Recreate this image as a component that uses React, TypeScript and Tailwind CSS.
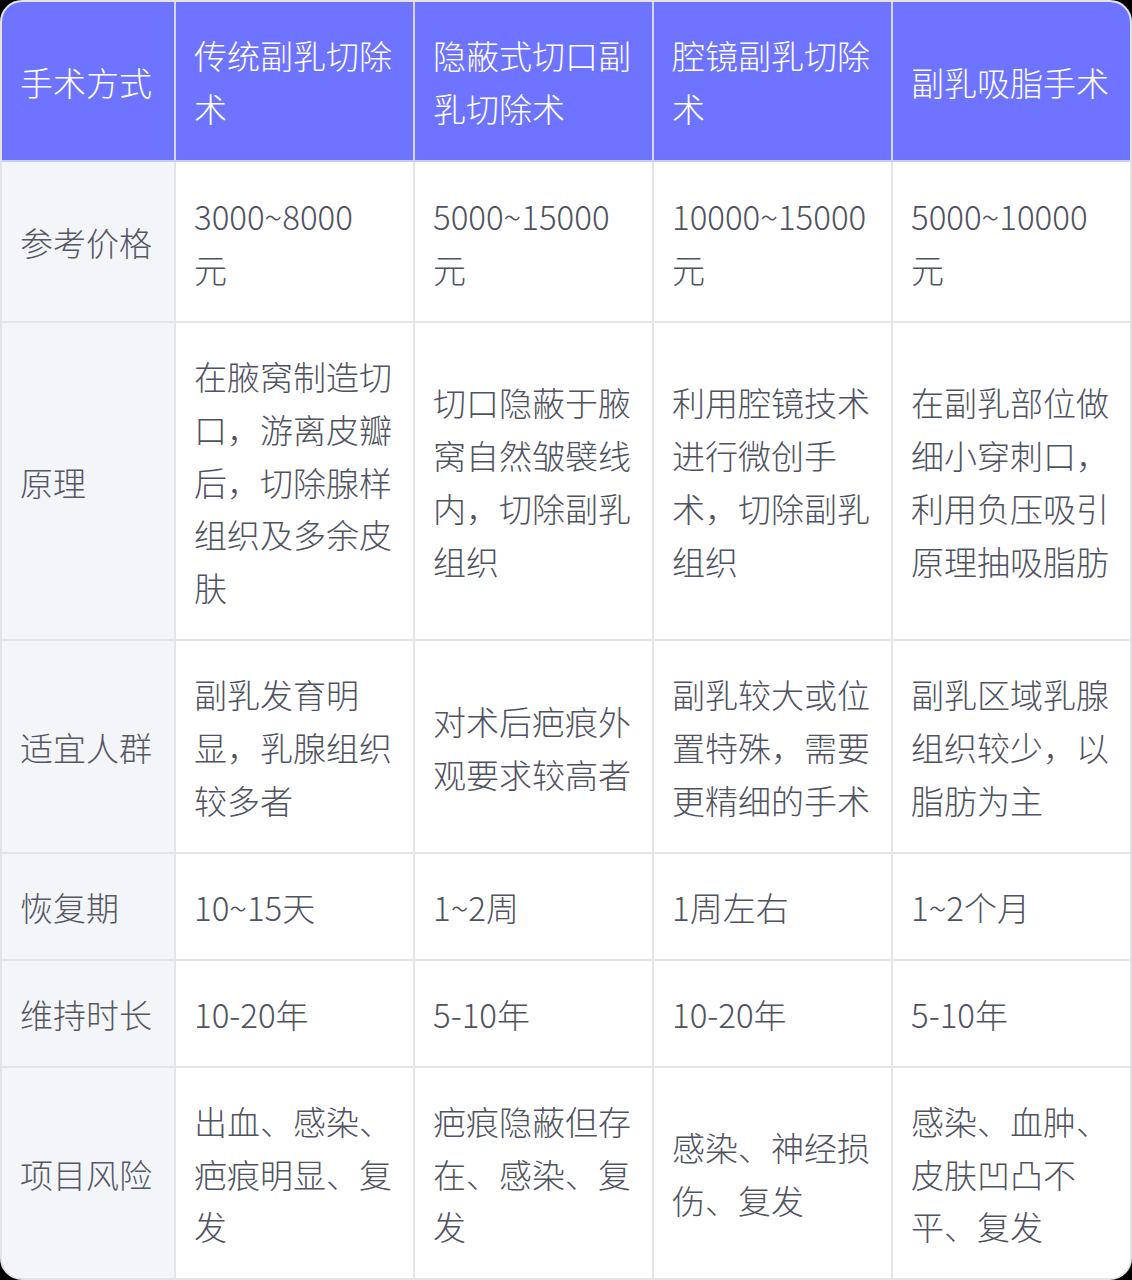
const header = ['手术方式', '传统副乳切除术', '隐蔽式切口副乳切除术', '腔镜副乳切除术', '副乳吸脂手术'];

const rows: { h: string; cells: string[] }[] = [
  { h: 'h-[161px]', cells: ['参考价格', '3000~8000\n元', '5000~15000\n元', '10000~15000\n元', '5000~10000\n元'] },
  {
    h: 'h-[318px]',
    cells: [
      '原理',
      '在腋窝制造切口，游离皮瓣后，切除腺样组织及多余皮肤',
      '切口隐蔽于腋窝自然皱襞线内，切除副乳组织',
      '利用腔镜技术进行微创手术，切除副乳组织',
      '在副乳部位做细小穿刺口，利用负压吸引原理抽吸脂肪',
    ],
  },
  {
    h: 'h-[213px]',
    cells: [
      '适宜人群',
      '副乳发育明显，乳腺组织较多者',
      '对术后疤痕外观要求较高者',
      '副乳较大或位置特殊，需要更精细的手术',
      '副乳区域乳腺组织较少，以脂肪为主',
    ],
  },
  { h: 'h-[107px]', cells: ['恢复期', '10~15天', '1~2周', '1周左右', '1~2个月'] },
  { h: 'h-[107px]', cells: ['维持时长', '10-20年', '5-10年', '10-20年', '5-10年'] },
  {
    h: 'h-[211px]',
    cells: ['项目风险', '出血、感染、疤痕明显、复发', '疤痕隐蔽但存在、感染、复发', '感染、神经损伤、复发', '感染、血肿、皮肤凹凸不平、复发'],
  },
];

const widths = ['w-[173px]', 'w-[239px]', 'w-[239px]', 'w-[239px]', 'w-[238px]'];

function App() {
  return (
    <div
      className="w-[1132px] h-[1280px] bg-black"
      style={{ fontFamily: '"Noto Sans CJK SC", "Noto Sans", sans-serif' }}
    >
      <div className="w-[1132px] h-[1280px] rounded-[22px] border-2 border-[#e3e3e8] bg-white overflow-hidden">
        <table className="w-[1128px] table-fixed border-collapse text-[33px] leading-[52.8px] font-light">
          <colgroup>
            {widths.map((w, i) => (
              <col key={i} className={w} />
            ))}
          </colgroup>
          <thead>
            <tr className="h-[159px] bg-[#6e74ff] text-white">
              {header.map((t, i) => (
                <th
                  key={i}
                  className={
                    'pl-[18px] pr-[18px] pt-[2px] pb-0 text-left align-middle font-light border-b-2 border-b-[#c9ccf7] ' +
                    (i < 4 ? 'border-r-2 border-r-[#d3d5f2]' : '')
                  }
                >
                  {t}
                </th>
              ))}
            </tr>
          </thead>
          <tbody>
            {rows.map((r, ri) => (
              <tr key={ri} className={r.h}>
                {r.cells.map((c, ci) => (
                  <td
                    key={ci}
                    className={
                      'pl-[18px] pr-[18px] pt-[2px] pb-0 align-middle whitespace-pre-line ' +
                      (ci === 0 ? 'bg-[#f4f5f9] text-[#555763] ' : 'bg-white text-[#4f5260] ') +
                      (ci < 4 ? 'border-r-2 border-r-[#e4e4e9] ' : '') +
                      (ri < rows.length - 1 ? 'border-b-2 border-b-[#e4e4e9]' : '')
                    }
                  >
                    {c}
                  </td>
                ))}
              </tr>
            ))}
          </tbody>
        </table>
      </div>
    </div>
  );
}

export default App;
